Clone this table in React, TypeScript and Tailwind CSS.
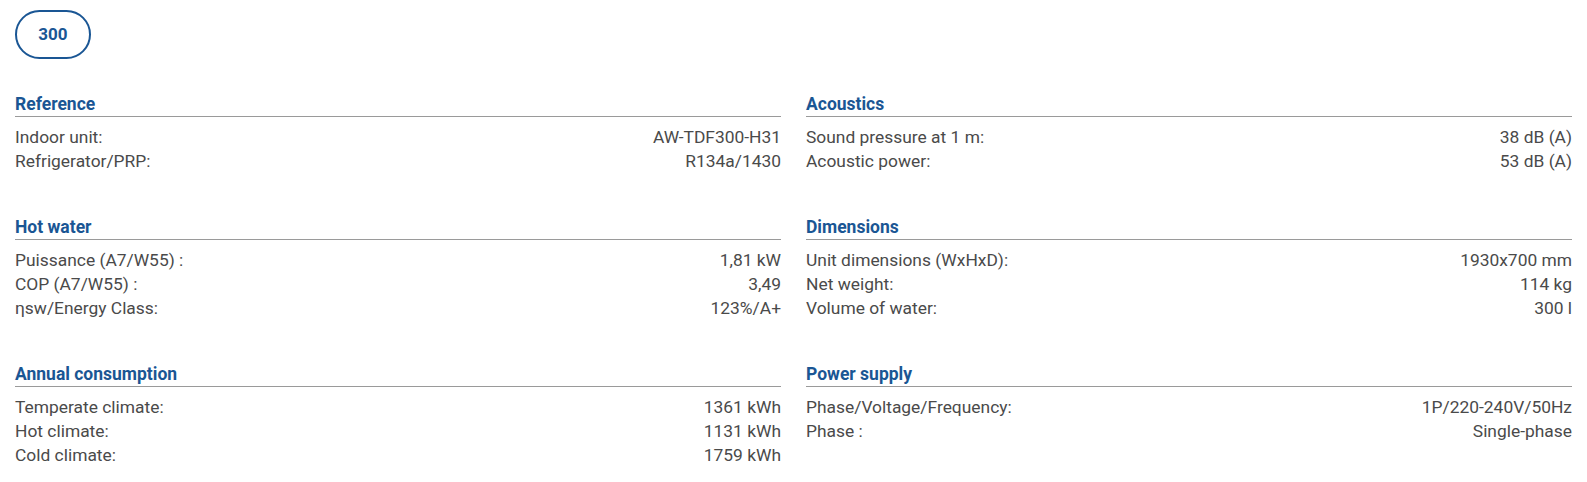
type Row = [string, string];

type Section = {
  title: string;
  rows: Row[];
};

const left: Section[] = [
  {
    title: "Reference",
    rows: [
      ["Indoor unit:", "AW-TDF300-H31"],
      ["Refrigerator/PRP:", "R134a/1430"],
    ],
  },
  {
    title: "Hot water",
    rows: [
      ["Puissance (A7/W55) :", "1,81 kW"],
      ["COP (A7/W55) :", "3,49"],
      ["ηsw/Energy Class:", "123%/A+"],
    ],
  },
  {
    title: "Annual consumption",
    rows: [
      ["Temperate climate:", "1361 kWh"],
      ["Hot climate:", "1131 kWh"],
      ["Cold climate:", "1759 kWh"],
    ],
  },
];

const right: Section[] = [
  {
    title: "Acoustics",
    rows: [
      ["Sound pressure at 1 m:", "38 dB (A)"],
      ["Acoustic power:", "53 dB (A)"],
    ],
  },
  {
    title: "Dimensions",
    rows: [
      ["Unit dimensions (WxHxD):", "1930x700 mm"],
      ["Net weight:", "114 kg"],
      ["Volume of water:", "300 l"],
    ],
  },
  {
    title: "Power supply",
    rows: [
      ["Phase/Voltage/Frequency:", "1P/220-240V/50Hz"],
      ["Phase :", "Single-phase"],
    ],
  },
];

function SpecSection({ section }: { section: Section }) {
  return (
    <div className="flex w-full flex-col">
      <h3 className="border-b border-[#9a9a9a] text-[17.5px] leading-[23px] font-bold text-[#1a5694]">
        {section.title}
      </h3>
      <div className="mt-2 flex flex-col">
        {section.rows.map(([label, value]) => (
          <div
            className="flex items-center justify-between text-[17.4px] leading-[24px] text-[#4a4a4a]"
            key={label}
          >
            <span>{label}</span>
            <span>{value}</span>
          </div>
        ))}
      </div>
    </div>
  );
}

export default function App() {
  return (
    <div
      className="min-h-[482px] w-full bg-white px-[15px] pt-[10px]"
      style={{ fontFamily: "Roboto, 'Noto Sans', sans-serif" }}
    >
      <div className="flex h-[49px] w-[76px] items-center justify-center rounded-full border-2 border-[#1a5694] text-[17px] font-bold text-[#1a5694]">
        300
      </div>

      <div className="mt-[34px] grid grid-cols-2 gap-x-[25px]">
        <div className="flex flex-col gap-[43px]">
          {left.map((section) => (
            <SpecSection key={section.title} section={section} />
          ))}
        </div>
        <div className="flex flex-col gap-[43px]">
          {right.map((section) => (
            <SpecSection key={section.title} section={section} />
          ))}
        </div>
      </div>
    </div>
  );
}
